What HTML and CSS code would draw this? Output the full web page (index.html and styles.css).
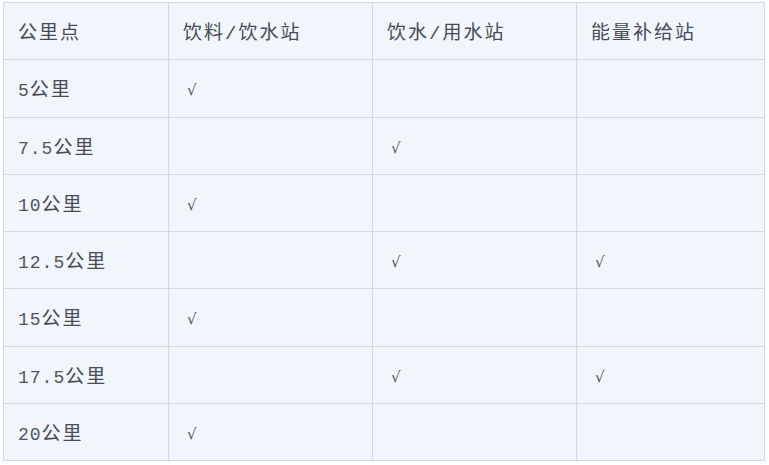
FILE: index.html
```
<!DOCTYPE html>
<html>
<head>
<meta charset="utf-8">
<link rel="stylesheet" href="styles.css">
</head>
<body>
<div class="wrap">
<table class="grid">
<colgroup><col class="c1"><col class="c2"><col class="c3"><col class="c4"></colgroup>
<tr><td>公里点</td><td>饮料/饮水站</td><td>饮水/用水站</td><td>能量补给站</td></tr>
<tr><td><span class="num">5</span>公里</td><td><span class="ck">√</span></td><td></td><td></td></tr>
<tr><td><span class="num">7.5</span>公里</td><td></td><td><span class="ck">√</span></td><td></td></tr>
<tr><td><span class="num">10</span>公里</td><td><span class="ck">√</span></td><td></td><td></td></tr>
<tr><td><span class="num">12.5</span>公里</td><td></td><td><span class="ck">√</span></td><td><span class="ck">√</span></td></tr>
<tr><td><span class="num">15</span>公里</td><td><span class="ck">√</span></td><td></td><td></td></tr>
<tr><td><span class="num">17.5</span>公里</td><td></td><td><span class="ck">√</span></td><td><span class="ck">√</span></td></tr>
<tr><td><span class="num">20</span>公里</td><td><span class="ck">√</span></td><td></td><td></td></tr>
</table>
</div>
</body>
</html>
```
FILE: styles.css
```
html, body {
  margin: 0;
  padding: 0;
  background: #ffffff;
}
.wrap {
  padding: 2px 0 0 3px;
}
.grid {
  border-collapse: collapse;
  table-layout: fixed;
  width: 761px;
  background: #f1f6fd;
  font-family: "Liberation Mono", "Noto Sans CJK SC", monospace;
  font-size: 19px;
  letter-spacing: 2px;
  color: #474c54;
}
.c1 { width: 165px; }
.c2 { width: 204px; }
.c3 { width: 204px; }
.c4 { width: 188px; }
.grid td {
  border: 1px solid #d3d9e3;
  height: 57.25px;
  padding: 0 0 0 14px;
  vertical-align: middle;
  box-sizing: border-box;
}
.num {
  font-size: 18px;
  letter-spacing: 1px;
  color: #50555c;
}
.ck {
  font-family: "DejaVu Sans", sans-serif;
  font-size: 15px;
  padding-left: 4px;
  position: relative;
  top: 2px;
  color: #555;
}
```
